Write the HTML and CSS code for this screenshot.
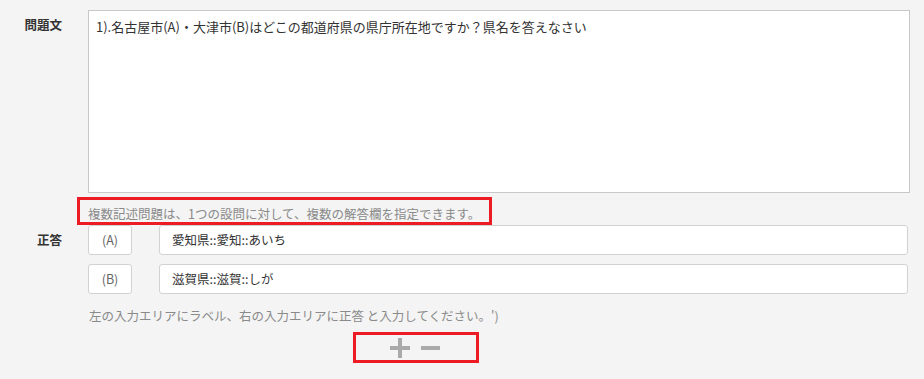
FILE: index.html
```html
<!DOCTYPE html>
<html lang="ja">
<head>
<meta charset="utf-8">
<link rel="stylesheet" href="styles.css">
</head>
<body>
<div class="form">
  <div class="label label-q">問題文</div>
  <div class="textarea">1).名古屋市(A)・大津市(B)はどこの都道府県の県庁所在地ですか？県名を答えなさい</div>

  <div></div>
  <div class="note">複数記述問題は、1つの設問に対して、複数の解答欄を指定できます。</div>

  <div class="label label-a">正答</div>
  <div class="answers">
    <div class="answer-row">
      <div class="tag">(A)</div>
      <div class="input">愛知県::愛知::あいち</div>
    </div>
    <div class="answer-row">
      <div class="tag">(B)</div>
      <div class="input">滋賀県::滋賀::しが</div>
    </div>
    <div class="hint">左の入力エリアにラベル、右の入力エリアに正答 と入力してください。')</div>
    <div class="pm">
      <svg class="icon" width="20" height="20" viewBox="0 0 20 20"><rect x="0" y="8" width="20" height="4" fill="#aaaaaa"/><rect x="8" y="0" width="4" height="20" fill="#aaaaaa"/></svg>
      <svg class="icon" width="19" height="20" viewBox="0 0 19 20"><rect x="0" y="8" width="19" height="4" fill="#aaaaaa"/></svg>
    </div>
  </div>
</div>
</body>
</html>
```

FILE: styles.css
```css
html, body {
  margin: 0;
  padding: 0;
  background: #f4f4f4;
}
body {
  font-family: "Noto Sans CJK JP", "Noto Sans", sans-serif;
  color: #333;
  width: 924px;
  height: 379px;
  overflow: hidden;
}
.form {
  display: grid;
  grid-template-columns: 62px 822px;
  column-gap: 26px;
  align-items: start;
}
.label {
  text-align: right;
  font-weight: bold;
  font-size: 12.5px;
  color: #333;
}
.label-q {
  margin-top: 16px;
  line-height: 18px;
}
.label-a {
  line-height: 30px;
}
.textarea {
  margin-top: 10px;
  height: 183px;
  box-sizing: border-box;
  background: #fff;
  border: 1px solid #c8c8c8;
  padding: 7px 7px;
  font-size: 13px;
  line-height: 18px;
  color: #333;
}
.note {
  margin-top: 4px;
  margin-left: -11px;
  width: 415px;
  box-sizing: border-box;
  border: 3px solid #ed1c24;
  padding: 5px 0 0 8px;
  font-size: 12.5px;
  line-height: 17px;
  color: #8a8a8a;
  white-space: nowrap;
}
.answers {
  display: flex;
  flex-direction: column;
  align-items: flex-start;
}
.answer-row {
  display: flex;
  gap: 27px;
  margin-bottom: 9px;
}
.tag {
  width: 44px;
  height: 30px;
  box-sizing: border-box;
  background: #fff;
  border: 1px solid #d2d2d2;
  border-radius: 3px;
  text-align: center;
  line-height: 28px;
  font-size: 12.5px;
  color: #666;
}
.input {
  width: 749px;
  height: 30px;
  box-sizing: border-box;
  background: #fff;
  border: 1px solid #d2d2d2;
  border-radius: 3px;
  padding-left: 12px;
  line-height: 28px;
  font-size: 12.5px;
  color: #333;
}
.hint {
  margin-top: 4px;
  padding-left: 1px;
  font-size: 12.5px;
  line-height: 17px;
  color: #8a8a8a;
}
.pm {
  margin-top: 8px;
  margin-left: 265px;
  width: 126px;
  height: 31px;
  box-sizing: border-box;
  border: 3px solid #ed1c24;
  display: flex;
  align-items: center;
  padding-left: 34px;
  gap: 11px;
}
.icon {
  display: block;
}
```
